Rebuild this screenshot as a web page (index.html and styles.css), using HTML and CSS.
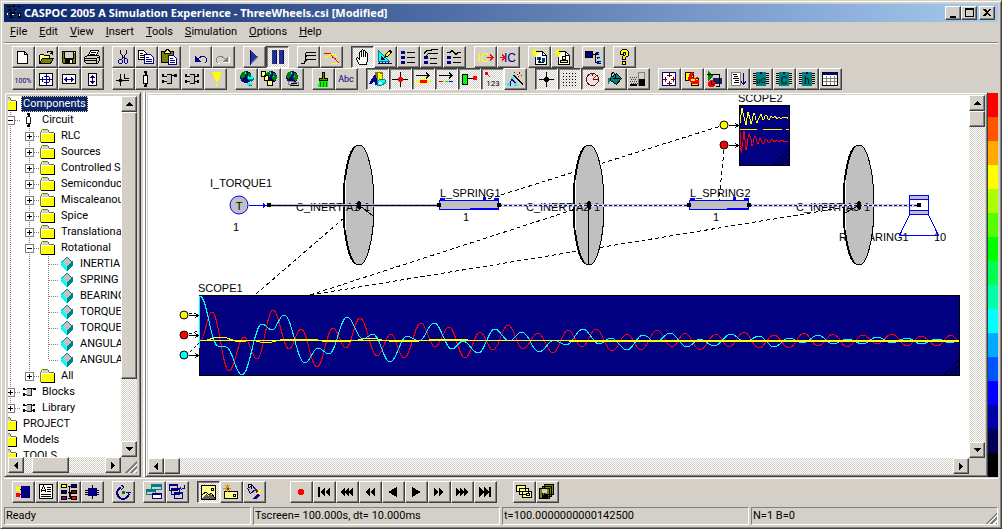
FILE: index.html
```
<!DOCTYPE html>
<html lang="en">
<head>
    <meta charset="UTF-8">
    <meta name="viewport" content="width=device-width, initial-scale=1.0">
    <title>CASPOC 2005 A Simulation Experience - ThreeWheels.csi [Modified]</title>
    <link rel="stylesheet" href="styles.css">
</head>
<body>
    <!-- shared symbols -->
    <svg class="symbols" aria-hidden="true">
        <symbol id="folder" viewBox="0 0 16 14">
            <path d="M1 4L3 1h5l2 3z" fill="#d4d0c8"/>
            <path d="M1 4h13v9H1z" fill="#ff0"/>
            <path d="M1.500 12V4.500h12" stroke="#fff" fill="none"/>
            <path d="M.5 13V3.500L2.500.5h5l2 3h4" stroke="#808000" fill="none"/>
            <path d="M1 13.500h13.500V4" stroke="#000" fill="none"/>
        </symbol>
        <symbol id="cube" viewBox="0 0 12 14">
            <path d="M6 0l5 5-5 4-5-4z" fill="#c0c0c0"/>
            <path d="M0 4l6 5v5l-6-5z" fill="#0ff"/>
            <path d="M12 4L6 9v5l6-5z" fill="#008080"/>
            <path d="M6 0L1 5M6 0l5 5" stroke="#008080"/>
        </symbol>
        <symbol id="part" viewBox="0 0 16 16">
            <path d="M5.500 4.500h4v8h-4z" fill="#fff" stroke="#000"/>
            <path d="M7 1h2v3H7zM7 13h2v3H7z" fill="#000"/>
            <path d="M6 0h3v2H6zM6 14h3v2H6z" fill="#000"/>
        </symbol>
        <symbol id="block" viewBox="0 0 16 16">
            <path d="M6 3h4v10H6z" fill="#c0c0c0"/>
            <path d="M6 3.500h5M10.500 3v10M6 12.500h4" stroke="#000"/>
            <path d="M1 3h2v3H1zM1 9h2v3H1zM13 3h3v3h-3z" fill="#000"/>
            <path d="M3 5.500h3M3 10.500h3M11 4.500h3" stroke="#000"/>
        </symbol>
        <symbol id="library" viewBox="0 0 16 16">
            <path d="M6 3h4v10H6z" fill="#c0c0c0"/>
            <path d="M6 3.500h5M10.500 3v10M6 12.500h4" stroke="#000"/>
            <path d="M1 3h2v3H1zM1 9h2v3H1zM13 3h2v3h-2zM13 9h2v3h-2z" fill="#000"/>
            <path d="M3 5.500h3M3 10.500h3M11 5.500h3M11 10.500h3" stroke="#000"/>
        </symbol>
        <symbol id="globe" viewBox="0 0 16 16">
            <circle cx="8" cy="6" r="6" fill="#000080"/>
            <path d="M4 1l4-1 1 3-2 1v2l-3 2-2-2 1-3zM10 2l3 1 1 4-2 3-3-2z" fill="#008000"/>
            <path d="M7 1h1v2H7zM10 5h1v1h-1z" fill="#0ff"/>
        </symbol>
        <symbol id="chip" viewBox="0 0 16 16">
            <path d="M0 2.500h16M0 4.500h16M0 6.500h16M0 8.500h16M0 10.500h16M0 12.500h16" stroke="#000"/>
            <path d="M3 1h10v14H3z" fill="#008080"/>
            <path d="M7 1h2v2H7z" fill="#000080"/>
        </symbol>
        <symbol id="bullets" viewBox="0 0 16 16">
            <path d="M1 2h4v3H1zM1 7h4v3H1zM1 12h4v3H1z" fill="#000080"/>
        </symbol>
        <symbol id="newdoc" viewBox="0 0 16 16">
            <path d="M4.500 2.500h7l4 4v9h-11z" fill="#fff" stroke="#000"/>
            <path d="M11.500 2v4.500h4" stroke="#000" fill="none"/>
            <path d="M0 3.500h8M4.500 0v8M1 0l6 7M7 0L1 7" stroke="#ff0" fill="none"/>
        </symbol>
        <symbol id="arrow-up" viewBox="0 0 7 4"><path d="M0 4h7L3.500 0z"/></symbol>
        <symbol id="arrow-down" viewBox="0 0 7 4"><path d="M0 0h7L3.500 4z"/></symbol>
        <symbol id="arrow-left" viewBox="0 0 4 7"><path d="M4 0v7L0 3.500z"/></symbol>
        <symbol id="arrow-right" viewBox="0 0 4 7"><path d="M0 0v7l4-3.500z"/></symbol>
    </svg>

    <div class="window">
        <header class="titlebar">
            <svg class="app-icon" viewBox="0 0 16 16"><path d="M1 1h5v1H1zM7 0h2v2H7zM11 1h4v1h-4zM2 4h3v2H2zM8 4h2v1H8zM4 7h5v2H4zM4 7h2v6H4zM4 12h4v1H4zM12 8h3v5h-3z"/><path d="M6 9h2v1H6zM13 9h1v2h-1zM1 8h1v2H1z" fill="#fff"/></svg>
            <h1>CASPOC 2005 A Simulation Experience - ThreeWheels.csi [Modified]</h1>
            <div class="window-controls">
                <button class="control" title="Minimize"><svg viewBox="0 0 12 10"><path d="M3 8h6v2H3z"/></svg></button>
                <button class="control" title="Maximize"><svg viewBox="0 0 12 10"><path d="M2 0h9v9H2zM3 2v6h7V2z" fill-rule="evenodd"/></svg></button>
                <button class="control close" title="Close"><svg viewBox="0 0 12 10"><path d="M2 1h2l2 2 2-2h2L7 4.500 10 8H8L6 6 4 8H2l3-3.500z"/></svg></button>
            </div>
        </header>

        <nav class="menubar">
            <button><u>F</u>ile</button>
            <button><u>E</u>dit</button>
            <button><u>V</u>iew</button>
            <button><u>I</u>nsert</button>
            <button><u>T</u>ools</button>
            <button><u>S</u>imulation</button>
            <button><u>O</u>ptions</button>
            <button><u>H</u>elp</button>
        </nav>

        <div class="toolbars">
            <div class="toolbar">
                <div class="group">
                    <button class="tool" title="New"><svg viewBox="0 0 16 16"><path d="M2.500 2.500h7l3 3v9h-10z" fill="#fff"/><path d="M9.500 2v3.500h3"/></svg></button>
                    <button class="tool" title="Open"><svg viewBox="0 0 16 16"><path d="M1.500 14V6.500l1-1h3l1 1h5v3h-7z" fill="#ff8"/><path d="M1.500 14.500l3-5h11l-3 5z" fill="#808000"/><path d="M9 3.500l1-1h3l1 1v2M12 4.500h3M14.500 2v3"/></svg></button>
                    <button class="tool" title="Save"><svg viewBox="0 0 16 16"><path d="M1.500 2.500h13v12h-12l-1-1z" fill="#808000"/><path d="M4 3h8v6H4z" fill="#d4d0c8" stroke="none"/><path d="M4 10h8v5H4z" fill="#000" stroke="none"/><path d="M9 11h2v3H9zM13 3h1v1h-1z" fill="#fff" stroke="none"/><path d="M3.500 3v6.500h9V3"/></svg></button>
                    <button class="tool" title="Print"><svg viewBox="0 0 16 16"><path d="M4.500 6.500l2-5h8l-2 5z" fill="#fff"/><path d="M7 3.500h5M6 5.500h5"/><path d="M.5 8.500l3-2h11l1 1v4l-2 3H2.500l-2-2z" fill="#d4d0c8"/><path d="M.5 9.500h12v4M1 11.500h12M12.500 9.500l3-2M3 14.500h9"/><path d="M9 10h2v1H9z" fill="#ff0" stroke="none"/></svg></button>
                </div>
                <div class="group">
                    <button class="tool" title="Cut"><svg viewBox="0 0 16 16"><path d="M5.500 1v3l4 6M11.500 1v3l-4 6"/><g stroke="#000080"><path d="M4.500 10.500h2l1 1v2l-1 1h-2l-1-1v-2zM10.500 9.500h1l1 1v3l-1 1h-1l-1-1v-3zM7.500 10v-2h2v2"/></g></svg></button>
                    <button class="tool" title="Copy"><svg viewBox="0 0 16 16"><path d="M.5 1.500h5l3 3v6h-8z" fill="#fff"/><path d="M2 4.500h3M2 6.500h5M2 8.500h5"/><path d="M6.500 5.500h6l3 3v6h-9z" fill="#fff" stroke="#000080"/><path d="M8 8.500h3M8 10.500h6M8 12.500h6" stroke="#000080"/></svg></button>
                    <button class="tool" title="Paste"><svg viewBox="0 0 16 16"><path d="M.5 2.500h12v11H.5z" fill="#808000"/><path d="M3.500 4.500v-2h1l1-2h2l1 2h1v2z" fill="#ff8"/><path d="M7.500 6.500h5l3 3v6h-8z" fill="#fff" stroke="#000080"/><path d="M9 9.500h3M9 11.500h5M9 13.500h5" stroke="#000080"/></svg></button>
                </div>
                <div class="group">
                    <button class="tool" title="Undo"><svg viewBox="0 0 16 16"><path d="M3 7v6h6z" fill="#000080" stroke="none"/><path d="M5.500 10.500l2-2 2-1h3l2 2v3l-2 2" stroke="#000080"/></svg></button>
                    <button class="tool" title="Redo"><svg viewBox="0 0 16 16"><path d="M14.500 8v5.500H8M3 14.500h2" stroke="#fff"/><path d="M13 7v6H7z" fill="#808080" stroke="none"/><path d="M10.500 10.500l-2-2-2-1h-3l-2 2v3l2 2" stroke="#808080"/></svg></button>
                </div>
                <div class="group">
                    <button class="tool" title="Start simulation"><svg viewBox="0 0 16 16"><path d="M4 1l8 7-8 8z" fill="#22308c" stroke="none"/><path d="M4.500 1v15" stroke="#000080"/><path d="M5 14.500l7-7" stroke="#6070b0"/></svg></button>
                    <button class="tool pressed" title="Pause simulation"><svg viewBox="0 0 16 16"><path d="M3 1h5v14H3zM10 1h5v14h-5z" fill="#22308c" stroke="none"/><path d="M7.500 1v14M14.500 1v14" stroke="#000080"/></svg></button>
                </div>
                <div class="group">
                    <button class="tool" title="Curves"><svg viewBox="0 0 16 16"><path d="M1 14.500h3l1-2V5l2-2h9M5 8.500l2-2h9M5 12.500l2-2h9"/></svg></button>
                    <button class="tool" title="Trace"><svg viewBox="0 0 16 16"><path d="M1 4.500h6l3 4 2 1 4 5" stroke="#f00"/><path d="M1 8.500h3l3-3h5l2 2M9 14.500h7" stroke="#ff0"/></svg></button>
                </div>
                <div class="group">
                    <button class="tool pressed" title="Pan"><svg viewBox="0 0 16 16"><path d="M5.500 15.500l-2-3-1-3 1-1 2 2V3.500l1-1 1 1v-2l1-1 1 1v1l1-1 1 1v2l1-1 1 1v7l-1 4z" fill="#fff"/><path d="M7.500 3v5M9.500 2v6M11.500 4v4"/></svg></button>
                    <button class="tool" title="Draw"><svg viewBox="0 0 16 16"><path d="M1.500 1.500v11h11z" fill="#0ff" stroke="#008080"/><path d="M4.500 8v2h2z" fill="#d4d0c8"/><path d="M1 14.500h14M2.500 13v2M5.500 13v2M8.500 13v2M11.500 13v2" stroke="#000080"/><path d="M8 8l1-3 4-4 2 2-4 4z" fill="#ff0"/><path d="M12 2l3 2"/></svg></button>
                    <button class="tool" title="List"><svg viewBox="0 0 16 16"><use href="#bullets" stroke="none"/><path d="M7 3.500h8M7 8.500h8M7 13.500h8"/></svg></button>
                    <button class="tool" title="List curves"><svg viewBox="0 0 16 16"><path d="M1 7h4v3H1zM1 12h4v3H1z" fill="#000080" stroke="none"/><path d="M1 4.500l3-3h3l3-1h5M3 6.500l3-2h9M7 9.500h7M7 14.500h7"/></svg></button>
                    <button class="tool" title="List waves"><svg viewBox="0 0 16 16"><path d="M1 7h4v3H1zM1 12h4v3H1z" fill="#000080" stroke="none"/><path d="M1 3.500h3l2-2 2 2 2 2 2-2h3M7 8.500h8M7 13.500h8"/></svg></button>
                </div>
                <div class="group">
                    <button class="tool" title="Save IC"><svg viewBox="0 0 16 16"><text x="0" y="13" class="ic" fill="#ff0">IC</text><path d="M10 8.500h6M13 5.500l3 3-3 3" stroke="#f00"/></svg></button>
                    <button class="tool" title="Load IC"><svg viewBox="0 0 16 16"><text x="4" y="13" class="ic" fill="#000080">IC</text><path d="M0 8.500h5M2 5.500l3 3-3 3" stroke="#f00"/></svg></button>
                </div>
                <div class="group">
                    <button class="tool" title="New schematic"><svg viewBox="0 0 16 16"><use href="#newdoc"/><path d="M6 8h4v3H6zM11 9h3v4h-3zM7 12h3v2H7z" fill="#004080" stroke="none"/><path d="M8 9v4h5"/></svg></button>
                    <button class="tool" title="New library"><svg viewBox="0 0 16 16"><use href="#newdoc"/><path d="M6.500 11.500h7v2h-7z" fill="#ff0"/><path d="M8.500 7.500h3v3h-3z"/></svg></button>
                </div>
                <div class="group">
                    <button class="tool" title="Blocks"><svg viewBox="0 0 16 16"><path d="M0 2h7v6H0z" fill="#000080"/><path d="M7 5.500h3v8h2M10 4.500h5"/><path d="M11 3h3v3h-3zM12 8h3v2h-3zM12 12h4v3h-4z" fill="#000080" stroke="none"/><path d="M13 4h2v1h-2zM13 9h2v1h-2zM14 13h2v1h-2z" fill="#0ff" stroke="none"/></svg></button>
                </div>
                <div class="group">
                    <button class="tool" title="Help"><svg viewBox="0 0 16 16"><path d="M4.500 5.500v-3l2-2h4l2 2v4l-3 2v2h-3v-3l3-2v-2h-2v2zM6.500 12.500h3v3h-3z" fill="#ff0"/></svg></button>
                </div>
            </div>

            <div class="toolbar">
                <div class="group">
                    <button class="tool" title="Zoom 100%"><svg viewBox="0 0 16 16"><text x="8" y="12" text-anchor="middle" class="tiny" fill="#000080">100%</text></svg></button>
                    <button class="tool" title="Zoom to fit"><svg viewBox="0 0 16 16"><path d="M1.500 2.500h13v12h-13z" fill="#fff"/><path d="M2 8.500h12M8.500 3v11M6 5.500h5M6 11.500h5M4.500 6v5M11.500 6v5" stroke="#000080"/></svg></button>
                    <button class="tool" title="Fit width"><svg viewBox="0 0 16 16"><path d="M1.500 3.500h13v9h-13z" fill="#fff"/><path d="M3 8.500h10M5.500 6v5M10.500 6v5M4.500 7v3M11.500 7v3" stroke="#000080"/></svg></button>
                    <button class="tool" title="Fit height"><svg viewBox="0 0 16 16"><path d="M4.500 2.500h8v12h-8z" fill="#fff"/><path d="M8.500 4v9M6 6.500h5M7 5.500h3M6 10.500h5M7 11.500h3" stroke="#000080"/></svg></button>
                </div>
                <div class="group">
                    <button class="tool" title="Node"><svg viewBox="0 0 16 16"><path d="M1 9.500h13M5.500 3v12M9.500 3v4h4"/><path d="M4 8h3v3H4z" fill="#000" stroke="none"/></svg></button>
                    <button class="tool" title="Component"><svg viewBox="0 0 16 16"><use href="#part" stroke="none"/></svg></button>
                    <button class="tool" title="Block"><svg viewBox="0 0 16 16"><use href="#block" stroke="none"/></svg></button>
                    <button class="tool" title="Library block"><svg viewBox="0 0 16 16"><use href="#library" stroke="none"/></svg></button>
                    <button class="tool" title="Note"><svg viewBox="0 0 16 16"><path d="M5 1h10l-4 9v1H9v-1zM9 13h2v2H9z" fill="#ff0" stroke="none"/></svg></button>
                </div>
                <div class="group">
                    <button class="tool" title="Web"><svg viewBox="0 0 16 16"><use href="#globe" stroke="none"/><path d="M10 6h3V4l3 3-3 3V8h-3zM14 12h-3v-2l-3 3 3 3v-2h3z" fill="#0ff" stroke="none"/><path d="M10 8.500h3v2l3-3M14 14.500h-3" stroke="#008080"/></svg></button>
                    <button class="tool" title="Web documents"><svg viewBox="0 0 16 16"><use href="#globe" stroke="none" x="2"/><path d="M.5.5h4v5h-4zM3.500 4.500h4v5h-4zM6.500 9.500h5v5h-5z" fill="#ff8"/></svg></button>
                    <button class="tool" title="Web link"><svg viewBox="0 0 16 16"><use href="#globe" stroke="none"/><path d="M4.500 10.500h5v3h-5zM9.500 11.500h5v3h-5z" stroke="#808080" fill="#d4d0c8"/><path d="M6 14.500h9M7 12.500h6"/></svg></button>
                </div>
                <div class="group">
                    <button class="tool" title="Format"><svg viewBox="0 0 16 16"><path d="M7.500 1.500h2v6h3v2h-8v-2h3z" fill="#808000"/><path d="M4 10h9v6H3z" fill="#0f0" stroke="none"/><path d="M5.500 11v5M8.500 11v5M11.500 11v5" stroke="#008000"/></svg></button>
                    <button class="tool" title="Text"><svg viewBox="0 0 16 16"><text x="8" y="11" text-anchor="middle" class="abc">Abc</text></svg></button>
                </div>
                <div class="group">
                    <button class="tool pressed" title="Shapes"><svg viewBox="0 0 16 16"><path d="M6 1h8v9H6z" fill="#808000" stroke="none"/><path d="M9 2l4 1v9L9 10z" fill="#ff0" stroke="none"/><path d="M0 13l5-9h2l2 10H6v-3H4l-1 2z" fill="#0000a0" stroke="none"/><path d="M8 11l3-3 5 1v3l-4 3-4-1z" fill="#0ff" stroke="#008080"/><path d="M10 11h3v2h-3z" fill="#fff" stroke="none"/></svg></button>
                    <button class="tool pressed" title="Show nodes"><svg viewBox="0 0 16 16"><path d="M0 8.500h16M8.500 1v15"/><path d="M7 6h3v1h1v3h-1v1H7v-1H6V7h1z" fill="#f00" stroke="none"/></svg></button>
                    <button class="tool pressed" title="Show current"><svg viewBox="0 0 16 16"><path d="M1 4.500h14M11 1.500l3 3-3 3"/><path d="M0 10h16v1H0zM4 8h9v5H4z" fill="#ff0" stroke="none"/><path d="M5 9h7v3H5z" fill="#f00" stroke="none"/></svg></button>
                    <button class="tool pressed" title="Show voltage"><svg viewBox="0 0 16 16"><path d="M1 4.500h14M11 1.500l3 3-3 3"/><path d="M1 10.500h4" stroke="#f00"/><path d="M5 10.500h2" stroke="#ff0"/><path d="M7 10.500h4" stroke="#0f0"/><path d="M11 10.500h4" stroke="#00f"/></svg></button>
                    <button class="tool pressed" title="Show values"><svg viewBox="0 0 16 16"><path d="M1.500 3.500h5v10h-5z" fill="#0f0"/><path d="M7 7.500h5"/><path d="M12 5h4v4h-4z" fill="#f00" stroke="none"/></svg></button>
                    <button class="tool pressed" title="Show numbers"><svg viewBox="0 0 16 16"><path d="M1 1h3v3H1z" fill="#f00" stroke="none"/><path d="M4 4l2 2" stroke="#f00"/><text x="9" y="15" text-anchor="middle" class="num">123</text></svg></button>
                    <button class="tool" title="Wizard"><svg viewBox="0 0 16 16"><path d="M6 4l10 10M7 4l9 9" /><path d="M7.500 1v1M9.500 3h1M12.500 1v2M14 4.500h1M11 5.500h1" stroke="#800000"/><path d="M1 14.500h2v-3l2-3 3 3v3h2M5 8V6" stroke="#000080"/><path d="M0 12h3v3H0zM7 12h3v3H7zM4 6h3v2H4z" fill="#0ff" stroke="none"/></svg></button>
                </div>
                <div class="group">
                    <button class="tool pressed" title="Crosshair"><svg viewBox="0 0 16 16"><path d="M1 8.500h15M8.500 1v15"/><path d="M7 6h3v1h1v3h-1v1H7v-1H6V7h1z" fill="#000" stroke="none"/></svg></button>
                    <button class="tool pressed" title="Grid"><svg viewBox="0 0 16 16"><path d="M2 2.500h14M2 5.500h14M2 8.500h14M2 11.500h14M2 14.500h14" stroke-dasharray="1 2"/></svg></button>
                    <button class="tool pressed" title="Gauge"><svg viewBox="0 0 16 16"><circle cx="8.500" cy="8.500" r="6" stroke="#800000"/><path d="M8.500 8.500h5M8.500 8.500l4-4M8.500 3v2" stroke="#800000"/></svg></button>
                    <button class="tool" title="Fill"><svg viewBox="0 0 16 16"><path d="M3.500 6.500l6-4 5 5-5 6-6-4z" fill="#008080"/><path d="M4.500 6V2.500l2-1 2 2v4M6 7.500h7"/><path d="M1 7l3-1-1 3-1 5-1-3z" fill="#008080" stroke="none"/></svg></button>
                    <button class="tool" title="Shading"><svg viewBox="0 0 16 16"><path d="M8.500 1.500h6v13h-6z" stroke="#808080"/><path d="M9 8h6v7H9z" fill="#000" stroke="none"/><path d="M0 6.500h7M1 8.500h6M0 10.500h8M1 12.500h7" stroke-dasharray="1 1" stroke="#404040"/><path d="M0 13h7v2H0z" fill="#000" stroke="none"/></svg></button>
                </div>
                <div class="group">
                    <button class="tool" title="Move"><svg viewBox="0 0 16 16"><path d="M1.500 1.500h13v13h-13z" fill="#fff" stroke="#000080"/><path d="M2 8.500h4M10 8.500h4M8.500 2v4M8.500 10v4M6 4.500h5M6 12.500h5M4.500 6v5M12.500 6v5" stroke="#800000"/></svg></button>
                    <button class="tool" title="Rotate"><svg viewBox="0 0 16 16"><path d="M1.500 1.500h8v8h-8zM7.500 7.500h7v7h-7z" fill="#ff0"/><path d="M7 1L5 4l-1 5 4 4h7v-4h-3l2-3-4 1-2-1 2-4z" fill="#f00" stroke="none"/><path d="M7 8h4v2H7z" fill="#ff0" stroke="none"/></svg></button>
                    <button class="tool" title="Timing"><svg viewBox="0 0 16 16"><path d="M1 0l6 5-6 5z" fill="#008000" stroke="none"/><path d="M6 7h9v6H6z" fill="#0a246a" stroke="none"/><path d="M0 3.500h12v12M9 15.500h4"/><circle cx="4.500" cy="12.500" r="3" fill="#f00" stroke="#f00"/><path d="M4.500 10v3h2"/></svg></button>
                    <button class="tool" title="Report"><svg viewBox="0 0 16 16"><path d="M1.500 1.500h9v13h-9z" fill="#fff" stroke="#808080"/><path d="M3 3.500h4M4 5.500h4M3 7.500h6M5 9.500h4M4 11.500h5"/><path d="M13.500 2v11M11 10.500l2.500 3 2.500-3" stroke="#000080"/></svg></button>
                    <button class="tool" title="Microcontroller export"><svg viewBox="0 0 16 16"><use href="#chip" stroke="none"/><text x="8" y="12" text-anchor="middle" class="num">µC</text></svg></button>
                    <button class="tool" title="C export"><svg viewBox="0 0 16 16"><use href="#chip" stroke="none"/><text x="8" y="13" text-anchor="middle" class="letter">C</text></svg></button>
                    <button class="tool" title="Header export"><svg viewBox="0 0 16 16"><use href="#chip" stroke="none"/><text x="8" y="13" text-anchor="middle" class="letter">h</text></svg></button>
                    <button class="tool" title="Table"><svg viewBox="0 0 16 16"><path d="M.5 1.500h15v13H.5z" fill="#fff"/><path d="M1 2h14v2H1z" fill="#000080" stroke="none"/><path d="M1 7.500h14M1 10.500h14M4.500 5v9M8.500 5v9M12.500 5v9" stroke="#808080"/></svg></button>
                </div>
            </div>
        </div>

        <main class="work">
            <aside class="panel tree-panel">
                <div class="tree-view">
                    <ul class="tree">
                        <li>
                            <div class="row"><span class="toggle-space"></span><svg class="icon"><use href="#folder"/></svg><span class="label selected">Components</span></div>
                            <ul>
                                <li>
                                    <div class="row"><span class="branch"><button class="toggle" aria-label="Collapse Circuit"><i class="minus"></i></button></span><svg class="icon"><use href="#part"/></svg><span class="label">Circuit</span></div>
                                    <ul>
                                        <li class="row"><span class="branch"><button class="toggle" aria-label="Expand RLC"><i class="plus"></i></button></span><svg class="icon"><use href="#folder"/></svg><span class="label">RLC</span></li>
                                        <li class="row"><span class="branch"><button class="toggle" aria-label="Expand Sources"><i class="plus"></i></button></span><svg class="icon"><use href="#folder"/></svg><span class="label">Sources</span></li>
                                        <li class="row"><span class="branch"><button class="toggle" aria-label="Expand Controlled Sources"><i class="plus"></i></button></span><svg class="icon"><use href="#folder"/></svg><span class="label">Controlled Sources</span></li>
                                        <li class="row"><span class="branch"><button class="toggle" aria-label="Expand Semiconductors"><i class="plus"></i></button></span><svg class="icon"><use href="#folder"/></svg><span class="label">Semiconductors</span></li>
                                        <li class="row"><span class="branch"><button class="toggle" aria-label="Expand Miscaleanous"><i class="plus"></i></button></span><svg class="icon"><use href="#folder"/></svg><span class="label">Miscaleanous</span></li>
                                        <li class="row"><span class="branch"><button class="toggle" aria-label="Expand Spice"><i class="plus"></i></button></span><svg class="icon"><use href="#folder"/></svg><span class="label">Spice</span></li>
                                        <li class="row"><span class="branch"><button class="toggle" aria-label="Expand Translational"><i class="plus"></i></button></span><svg class="icon"><use href="#folder"/></svg><span class="label">Translational</span></li>
                                        <li>
                                            <div class="row"><span class="branch"><button class="toggle" aria-label="Collapse Rotational"><i class="minus"></i></button></span><svg class="icon"><use href="#folder"/></svg><span class="label">Rotational</span></div>
                                            <ul>
                                                <li class="row"><span class="branch leaf"></span><svg class="icon"><use href="#cube"/></svg><span class="label">INERTIA</span></li>
                                                <li class="row"><span class="branch leaf"></span><svg class="icon"><use href="#cube"/></svg><span class="label">SPRING</span></li>
                                                <li class="row"><span class="branch leaf"></span><svg class="icon"><use href="#cube"/></svg><span class="label">BEARING</span></li>
                                                <li class="row"><span class="branch leaf"></span><svg class="icon"><use href="#cube"/></svg><span class="label">TORQUE</span></li>
                                                <li class="row"><span class="branch leaf"></span><svg class="icon"><use href="#cube"/></svg><span class="label">TORQUE</span></li>
                                                <li class="row"><span class="branch leaf"></span><svg class="icon"><use href="#cube"/></svg><span class="label">ANGULAR</span></li>
                                                <li class="row"><span class="branch leaf"></span><svg class="icon"><use href="#cube"/></svg><span class="label">ANGULAR</span></li>
                                            </ul>
                                        </li>
                                        <li class="row"><span class="branch"><button class="toggle" aria-label="Expand All"><i class="plus"></i></button></span><svg class="icon"><use href="#folder"/></svg><span class="label">All</span></li>
                                    </ul>
                                </li>
                                <li class="row"><span class="branch"><button class="toggle" aria-label="Expand Blocks"><i class="plus"></i></button></span><svg class="icon"><use href="#block"/></svg><span class="label">Blocks</span></li>
                                <li class="row"><span class="branch"><button class="toggle" aria-label="Expand Library"><i class="plus"></i></button></span><svg class="icon"><use href="#library"/></svg><span class="label">Library</span></li>
                            </ul>
                        </li>
                        <li class="row"><span class="toggle-space"></span><svg class="icon"><use href="#folder"/></svg><span class="label">PROJECT</span></li>
                        <li class="row"><span class="toggle-space"></span><svg class="icon"><use href="#folder"/></svg><span class="label">Models</span></li>
                        <li class="row"><span class="toggle-space"></span><svg class="icon"><use href="#folder"/></svg><span class="label">TOOLS</span></li>
                    </ul>
                </div>
                <div class="scrollbar vertical">
                    <button class="arrow" aria-label="Scroll up"><svg width="7" height="4"><use href="#arrow-up"/></svg></button>
                    <div class="thumb tree-thumb-v"></div>
                    <button class="arrow last" aria-label="Scroll down"><svg width="7" height="4"><use href="#arrow-down"/></svg></button>
                </div>
                <div class="scrollbar">
                    <button class="arrow" aria-label="Scroll left"><svg width="4" height="7"><use href="#arrow-left"/></svg></button>
                    <div class="thumb tree-thumb-h"></div>
                    <button class="arrow last" aria-label="Scroll right"><svg width="4" height="7"><use href="#arrow-right"/></svg></button>
                </div>
                <div class="grip"></div>
            </aside>

            <section class="panel sheet-panel">
                <div class="sheet">
                    <svg class="diagram" width="821" height="364" viewBox="148 95 821 364">
                        <!-- signal links -->
                        <g class="link">
                            <path d="M488 199L724 125M724 150L719 200"/>
                            <path d="M256 294L359 205M310 295L588 205M310 295L859 205"/>
                        </g>
                        <g class="name">
                            <text x="210" y="187">I_TORQUE1</text>
                            <text x="233" y="231">1</text>
                            <text x="440" y="197">L_SPRING1</text>
                            <text x="463" y="221">1</text>
                            <text x="690" y="197">L_SPRING2</text>
                            <text x="713" y="221">1</text>
                            <text x="839" y="241">R_BEARING1</text>
                            <text x="934" y="241">10</text>
                            <text x="198" y="292">SCOPE1</text>
                            <text x="738" y="102">SCOPE2</text>
                        </g>
                        <!-- torque source -->
                        <circle cx="239" cy="205" r="9" class="part"/>
                        <text x="239" y="210" text-anchor="middle" class="t">T</text>
                        <path d="M249 205.500h18" stroke="#00f"/>
                        <path d="M263 203l4 2.500-4 2.500z" fill="#00f"/>
                        <!-- wheels -->
                        <g class="wheel">
                            <ellipse cx="357" cy="205" rx="14" ry="59"/><ellipse cx="359" cy="205" rx="15" ry="60"/>
                            <ellipse cx="587" cy="205" rx="14" ry="59"/><ellipse cx="589" cy="205" rx="15" ry="60"/>
                            <ellipse cx="857" cy="205" rx="14" ry="59"/><ellipse cx="859" cy="205" rx="15" ry="60"/>
                            <path d="M345.500 180v50M575.500 180v50M845.500 180v50" stroke="#fff"/>
                            <path d="M359 205l14 11M588.500 205v59M859 205l-14 8"/>
                        </g>
                        <!-- springs -->
                        <g class="part">
                            <path d="M439.500 200.500h59v9h-59zM689.500 200.500h59v9h-59z"/>
                            <path d="M470 208.500h28M727 208.500h21"/>
                        </g>
                        <path d="M440 198h5v3h-5zM494 198h5v3h-5zM690 198h5v3h-5zM744 198h5v3h-5zM483 197h3v3h-3zM733 197h3v3h-3z" fill="#00f"/>
                        <!-- shafts -->
                        <path d="M269 205.500h170M499 205.500h190M749 205.500h170" class="shaft"/>
                        <g class="name">
                            <text x="296" y="211">C_INERTIA1</text>
                            <text x="364" y="211">1</text>
                            <text x="526" y="211">C_INERTIA2</text>
                            <text x="594" y="211">1</text>
                            <text x="796" y="211">C_INERTIA3</text>
                            <text x="864" y="211">1</text>
                        </g>
                        <path d="M269 204.500h170M499 204.500h190M749 204.500h170" stroke="#c0c0c0"/>
                        <path d="M269 205.500h170" stroke="#000"/>
                        <path d="M269 205.500h170" stroke="#0000c0" stroke-dasharray="2 4"/>
                        <path d="M499 205.500h190M749 205.500h170" stroke="#fff"/>
                        <path d="M499 205.500h190M749 205.500h170" stroke="#0000c0" stroke-dasharray="3 2"/>
                        <path d="M267 203h4v4h-4zM437 203h4v4h-4zM497 203h4v4h-4zM687 203h4v4h-4zM747 203h4v4h-4zM917 203h4v4h-4z"/>
                        <path d="M359 200l2 3v5l-2 2-2-2v-5zM589 200l2 3v5l-2 2-2-2v-5zM859 200l2 3v5l-2 2-2-2v-5z"/>
                        <!-- bearing -->
                        <g class="part">
                            <path d="M909.500 195.500h19v4h-19zM909.500 210.500h19v4h-19z"/>
                            <path d="M909.500 199v12M928.500 199v12M909.500 215l-10 20.500h39l-10-20.500" fill="none"/>
                        </g>
                        <!-- scope inputs -->
                        <g class="pin">
                            <path d="M189 315.500h10M189 335.500h10M189 355.500h10M729 125.500h10M729 145.500h10"/>
                            <path d="M195 313l3 2.500-3 2.500M195 333l3 2.500-3 2.500M195 353l3 2.500-3 2.500M735 123l3 2.500-3 2.500M735 143l3 2.500-3 2.500"/>
                            <path d="M190 352l9-9M189 334l9-3M189 314l7-1" stroke-dasharray="3 2"/>
                            <circle cx="184" cy="315" r="4" fill="#ff0"/>
                            <circle cx="184" cy="335" r="4" fill="#f00"/>
                            <circle cx="184" cy="355" r="4" fill="#0ff"/>
                            <circle cx="724" cy="125" r="4" fill="#ff0"/>
                            <circle cx="724" cy="145" r="4" fill="#f00"/>
                        </g>
                        <svg x="199" y="295" width="762" height="82">
                            <rect x=".5" y=".5" width="760" height="80" class="screen"/>
                            <path d="M.5 1v52" stroke="#0ff"/>
                            <g id="scope1" class="traces"></g>
                            <path d="M1 45.500h759" stroke="#ff0"/>
                            <path d="M745 80l15-15M750 80l10-10M755 80l5-5" stroke="#000"/>
                        </svg>
                        <svg x="739" y="105" width="52" height="62">
                            <rect x=".5" y=".5" width="50" height="60" class="screen"/>
                            <path d="M1 24.500h17M24 24.500h19M47 24.500h3" stroke="#ff0"/>
                            <g id="scope2" class="traces"></g>
                            <path d="M34 60l16-16M39 60l11-11M44 60l6-6" stroke="#000"/>
                        </svg>
                    </svg>
                </div>
                <div class="scrollbar vertical">
                    <button class="arrow" aria-label="Scroll up"><svg width="7" height="4"><use href="#arrow-up"/></svg></button>
                    <div class="thumb"></div>
                    <button class="arrow last" aria-label="Scroll down"><svg width="7" height="4"><use href="#arrow-down"/></svg></button>
                </div>
                <div class="scrollbar">
                    <button class="arrow" aria-label="Scroll left"><svg width="4" height="7"><use href="#arrow-left"/></svg></button>
                    <div class="thumb"></div>
                    <button class="arrow last" aria-label="Scroll right"><svg width="4" height="7"><use href="#arrow-right"/></svg></button>
                </div>
            </section>
            <div class="colorbar"></div>
        </main>

        <div class="toolbar bottom">
            <div class="group">
                <button class="tool" title="Scope block"><svg viewBox="0 0 16 16"><path d="M6 2h9v12H6z" fill="#000080" stroke="none"/><path d="M4 5.500h3M4 10.500h3"/><path d="M1 3h4v4H1z" fill="#ff0" stroke="none"/><path d="M1 9h4v4H1z" fill="#f00" stroke="none"/></svg></button>
                <button class="tool" title="Text"><svg viewBox="0 0 16 16"><path d="M1.500.5h13v14h-13z" fill="#fff"/><path d="M3.500 8V6l2-4 2 4v2M4 6.500h3M9 3.500h4M9 5.500h4M9 7.500h4M3 10.500h10M3 12.500h10"/></svg></button>
                <button class="tool" title="Nodes"><svg viewBox="0 0 16 16"><path d="M7 2.500h4M7 8.500h2v5M8.500 3v10M7 14.500h4"/><path d="M.5.5h5v3h-5z" fill="#ff0"/><path d="M10.500.5h5v3h-5zM.5 6.500h5v3h-5z" fill="#000080"/><path d="M10.500 6.500h5v3h-5z" fill="#800000"/><path d="M.5 12.500h5v3h-5z" fill="#800080"/><path d="M10.500 12.500h5v3h-5z" fill="#f00"/></svg></button>
                <button class="tool" title="Chip"><svg viewBox="0 0 16 16"><path d="M1 6.500h14M1 8.500h14M1 10.500h14M8.500 1v14" /><path d="M4 4h9v8H4z" fill="#000080" stroke="none"/></svg></button>
            </div>
            <div class="group">
                <button class="tool" title="Refresh"><svg viewBox="0 0 16 16"><path d="M6 3.500l-3 2-1 3 1 4 3 2h4l3-2 1-3" stroke="#000080" stroke-width="2"/><path d="M11 8.500h5M6 1l3 2-3 3" stroke="#000080"/><path d="M7 7h3v3H7z" fill="#008000" stroke="none"/></svg></button>
            </div>
            <div class="group">
                <button class="tool" title="Tile windows"><svg viewBox="0 0 16 16"><path d="M5.500.5h10v5h-10zM.5 5.500h9v5h-9z" fill="#d4d0c8" stroke="#008080"/><path d="M5 1.500h11M0 6.500h10" stroke="#008080" stroke-width="2"/><path d="M6.500 9.500h9v5h-9z" fill="#fff" stroke="#000080"/><path d="M6 10h10" stroke="#000080" stroke-width="2"/></svg></button>
                <button class="tool" title="Cascade windows"><svg viewBox="0 0 16 16"><g fill="#d4d0c8" stroke="#000080"><path d="M.5.5h8v6h-8zM2.500 4.500h8v6h-8zM5.500 8.500h8v6h-8z"/><path d="M0 1.500h9M2 5.500h9M5 9.500h9"/><path d="M15.500 1v3h-3M12 3l-1 1 2 2"/></g></svg></button>
            </div>
            <div class="group">
                <button class="tool pressed" title="Picture"><svg viewBox="0 0 16 16"><path d="M1.500 1.500h14v14h-14z" fill="#ff8"/><path d="M2 15l4-5 2 2 3-2 4 5z" fill="#606060" stroke="none"/><path d="M2 11l4-3 3 3 2-2 4 5M11 4h2v2h-2z"/></svg></button>
                <button class="tool" title="New picture"><svg viewBox="0 0 16 16"><path d="M1.500 7.500h13v7h-13z" fill="#ff8"/><path d="M0 4.500h8M4.500 0v8M2 1l5 6M7 1L2 7" stroke="#c0a000"/><path d="M10.500 10.500h2v2h-2z" fill="#fff"/><path d="M4 4h2v2H4z" fill="#f00" stroke="none"/></svg></button>
                <button class="tool" title="Paint"><svg viewBox="0 0 16 16"><path d="M1.500 4.500l5-3 3 4-5 4z" fill="#c0c0c0" stroke="#000080"/><path d="M2.500 4V.5h3v4"/><path d="M8 3l4 4-1 3z" fill="#800080" stroke="none"/><path d="M14.500 6l-3 5" stroke="#ff0" stroke-width="2"/><path d="M12 10l2 1-4 4H7l2-3z" fill="#000080" stroke="none"/></svg></button>
            </div>
            <div class="group player">
                <button class="tool" title="Record"><svg viewBox="0 0 16 16"><path d="M6 5h4v1h1v4h-1v1H6v-1H5V6h1z" fill="#f00" stroke="none"/></svg></button>
                <button class="tool solid" title="First"><svg viewBox="0 0 16 16"><path d="M2 3h2v10H2zM9 3v10L4 8zM14 3v10L9 8z"/></svg></button>
                <button class="tool solid" title="Rewind fast"><svg viewBox="0 0 16 16"><path d="M6 4v8L1 8zM10 4v8L5 8zM14 4v8L9 8z"/></svg></button>
                <button class="tool solid" title="Rewind"><svg viewBox="0 0 16 16"><path d="M8 4v8L3 8zM13 4v8L8 8z"/></svg></button>
                <button class="tool solid" title="Step back"><svg viewBox="0 0 16 16"><path d="M12 3v10L3 8z"/></svg></button>
                <button class="tool solid" title="Play"><svg viewBox="0 0 16 16"><path d="M4 3v10l9-5z"/></svg></button>
                <button class="tool solid" title="Forward"><svg viewBox="0 0 16 16"><path d="M3 4v8l5-4zM8 4v8l5-4z"/></svg></button>
                <button class="tool solid" title="Fast forward"><svg viewBox="0 0 16 16"><path d="M2 4v8l5-4zM6 4v8l5-4zM10 4v8l5-4z"/></svg></button>
                <button class="tool solid" title="Last"><svg viewBox="0 0 16 16"><path d="M2 3v10l5-5zM7 3v10l5-5zM12 3h2v10h-2z"/></svg></button>
            </div>
            <div class="group frames">
                <button class="tool" title="Frames"><svg viewBox="0 0 16 16"><path d="M.5 1.500h9v6h-9zM3.500 4.500h9v6h-9zM6.500 7.500h9v6h-9z" fill="#ff8"/><path d="M10.500 9.500h3v2h-3z" fill="#fff"/></svg></button>
                <button class="tool" title="Save frames"><svg viewBox="0 0 16 16"><path d="M5.500.5h9v10h-9zM3.500 2.500h9v10h-9zM.5 4.500h10v10H.5z" fill="#808000"/><path d="M3 5h5v4H3z" fill="#d4d0c8" stroke="none"/><path d="M3 11h6v4H3z" fill="#000" stroke="none"/></svg></button>
            </div>
        </div>

        <footer class="statusbar">
            <span>Ready</span>
            <span>Tscreen= 100.000s, dt= 10.000ms</span>
            <span>t=100.0000000000142500</span>
            <span class="status-last">N=1 B=0</span>
        </footer>
    </div>
    <script src="script.js"></script>
</body>
</html>
```
FILE: styles.css
```
* {
    box-sizing: border-box;
}
body {
    margin: 0;
    background-color: #d4d0c8;
    font-family: Roboto, Tahoma, sans-serif;
    font-size: 11px;
    line-height: 16px;
    color: #000;
}
button {
    margin: 0;
    padding: 0;
    border: none;
    background: none;
    font: inherit;
    color: inherit;
}
svg {
    display: block;
    flex: none;
    shape-rendering: crispEdges;
}
.symbols {
    display: none;
}
.window {
    display: flex;
    flex-direction: column;
    height: 100vh;
    padding: 3px;
    border: 1px solid;
    border-color: #d4d0c8 #404040 #404040 #d4d0c8;
    box-shadow: inset 1px 1px #fff, inset -1px -1px #808080;
}

/* title bar */
.titlebar {
    display: flex;
    align-items: center;
    height: 18px;
    padding: 0 3px 0 2px;
    background: linear-gradient(to right, #0a246a, #a6caf0);
}
.app-icon {
    width: 16px;
    height: 16px;
    margin-right: 2px;
}
.titlebar h1 {
    flex: 1;
    margin: 0;
    font-family: "Noto Sans", sans-serif;
    font-size: 11px;
    font-weight: bold;
    line-height: 18px;
    color: #fff;
    white-space: nowrap;
    overflow: hidden;
}
.window-controls {
    display: flex;
}
.control {
    display: flex;
    justify-content: center;
    align-items: center;
    width: 16px;
    height: 14px;
}
.control svg {
    width: 12px;
    height: 10px;
}
.control.close {
    margin-left: 2px;
}
.control,
.tool,
.arrow,
.thumb {
    background-color: #d4d0c8;
    border: 1px solid;
    border-color: #fff #404040 #404040 #fff;
    box-shadow: inset -1px -1px #808080;
}

/* menu */
.menubar {
    display: flex;
    height: 22px;
    border-bottom: 1px solid #fff;
    box-shadow: inset 0 -1px #808080;
}
.menubar button {
    height: 20px;
    padding: 0 6px;
}

/* toolbars */
.toolbars {
    padding: 2px 0;
}
.toolbar {
    display: flex;
    gap: 8px;
    padding-left: 8px;
}
.group {
    display: flex;
}
.tool {
    width: 23px;
    height: 22px;
    padding: 2px;
}
.tool svg {
    width: 16px;
    height: 16px;
    fill: none;
    stroke: #000;
    overflow: visible;
}
.tool.solid svg {
    fill: #000;
    stroke: none;
}
.tool.pressed {
    border-color: #404040 #fff #fff #404040;
    box-shadow: inset 1px 1px #808080;
}
.tool.pressed,
.scrollbar {
    background: repeating-conic-gradient(#fff 0 25%, #d4d0c8 0 50%) 0 0 / 2px 2px;
}
.tool text {
    stroke: none;
}
.ic {
    font-family: "Liberation Sans", sans-serif;
    font-size: 12px;
}
.tiny {
    font-size: 7px;
}
.num {
    font-size: 8px;
    fill: #000;
}
.letter {
    font-size: 10px;
    fill: #000;
}
.abc {
    font-size: 9px;
    fill: #000080;
}

/* work area */
.work {
    display: flex;
    flex: 1;
    min-height: 0;
}
.panel {
    display: grid;
    grid-template-columns: minmax(0, 1fr) 16px;
    grid-template-rows: minmax(0, 1fr) 16px;
    border: 1px solid;
    border-color: #d4d0c8 #404040 #404040 #808080;
}
.tree-panel {
    flex: none;
    width: 137px;
    padding: 3px;
    border-left-color: #d4d0c8;
    box-shadow: inset 1px 1px #fff, inset -1px -1px #808080;
}
.sheet-panel {
    flex: 1;
    min-width: 0;
    margin-left: 4px;
    padding: 2px;
    box-shadow: inset 1px 1px #fff, inset -1px -1px #808080, -2px 0 #fff;
}
.tree-view,
.sheet {
    overflow: hidden;
    background-color: #fff;
}
.tree {
    margin: 0 0 0 -25px;
}
.tree,
.tree ul {
    padding: 0;
    list-style: none;
    white-space: nowrap;
}
.tree ul {
    margin: 0;
    padding-left: 19px;
    background: repeating-linear-gradient(#808080 0 1px, transparent 1px 2px) no-repeat 27px 0 / 1px calc(100% - 8px);
}
.row {
    display: flex;
    align-items: center;
    height: 16px;
}
.toggle-space,
.branch {
    flex: none;
    width: 19px;
}
.branch {
    display: flex;
    align-items: center;
    height: 16px;
    padding-left: 4px;
    background: repeating-linear-gradient(to right, #808080 0 1px, transparent 1px 2px) no-repeat 9px 8px / 10px 1px;
}
.toggle {
    display: flex;
    justify-content: center;
    align-items: center;
    width: 9px;
    height: 9px;
    border: 1px solid #808080;
    background-color: #fff;
}
.minus,
.plus {
    width: 5px;
    height: 5px;
    background: linear-gradient(#000, #000) no-repeat 0 2px / 5px 1px;
}
.plus {
    background: linear-gradient(#000, #000) no-repeat 0 2px / 5px 1px, linear-gradient(#000, #000) no-repeat 2px 0 / 1px 5px;
}
.icon {
    width: 16px;
    height: 14px;
    margin-right: 3px;
}
.label {
    padding: 0 2px;
}
.label.selected {
    outline: 1px dotted #ffdf80;
    outline-offset: -1px;
    background-color: #0a246a;
    color: #fff;
}

/* scrollbars */
.scrollbar {
    display: flex;
}
.scrollbar.vertical {
    flex-direction: column;
}
.arrow {
    display: flex;
    justify-content: center;
    align-items: center;
    flex: none;
    width: 16px;
    height: 16px;
}
.arrow.last {
    margin-left: auto;
}
.vertical .arrow.last {
    margin: auto 0 0;
}
.thumb {
    flex: none;
    width: 16px;
    height: 16px;
}
.tree-thumb-v {
    height: 74%;
}
.tree-thumb-h {
    width: 37px;
    margin-left: 8px;
}
.grip,
.status-last {
    background:
        linear-gradient(135deg, #d4d0c8 50%, transparent 50%) no-repeat right bottom / 12px 12px,
        repeating-linear-gradient(135deg, #808080 0 2px, #fff 2px 3px, #d4d0c8 3px 4px) no-repeat right bottom / 12px 12px;
}

/* diagram */
.link {
    stroke: #000;
    stroke-dasharray: 4 3;
}
.name,
.t {
    font-family: "Liberation Sans", Arial, sans-serif;
    font-size: 11px;
}
.wheel {
    fill: #c0c0c0;
    stroke: #000;
}
.part {
    fill: #c0c0c0;
    stroke: #00f;
}
.shaft {
    stroke: #c0c0c0;
    stroke-width: 3;
}
.pin {
    fill: none;
    stroke: #000;
}
.pin circle,
circle.part {
    shape-rendering: geometricPrecision;
}
.screen {
    fill: #000080;
    stroke: #000;
}
.traces {
    fill: none;
}
.colorbar {
    width: 10px;
    margin-top: 1px;
    background: linear-gradient(
        #f00 0 6.25%, #f50 0 12.5%, #fa0 0 18.75%, #ff0 0 25%,
        #af0 0 31.25%, #5f0 0 37.5%, #0f0 0 43.75%, #0f5 0 50%,
        #0fa 0 56.25%, #0ff 0 62.5%, #0af 0 68.75%, #05f 0 75%,
        #00f 0 81.25%, #00a 0 87.5%, #005 0 93.75%, #000 0
    );
}

/* bottom */
.toolbar.bottom {
    height: 29px;
    margin-top: 1px;
    padding-top: 2px;
    border-top: 1px solid #fff;
}
.player {
    margin-left: 16px;
}
.frames {
    margin-left: 8px;
}
.statusbar {
    display: flex;
    gap: 2px;
}
.statusbar span {
    flex: 1;
    height: 18px;
    padding: 0 1px;
    border: 1px solid;
    border-color: #808080 #fff #fff #808080;
    white-space: nowrap;
    overflow: hidden;
}
```
FILE: script.js
```
// turning points of each signal, in scope pixels
const red = [
    [1, 46], [13, 17], [30, 76], [45, 42], [58, 64], [74, 15], [90, 54], [102, 34], [118, 72],
    [134, 33], [147, 53], [161, 23], [178, 61], [192, 39], [205, 63], [222, 28], [236, 52],
    [250, 32], [266, 63], [281, 37], [294, 55], [309, 30], [324, 54], [339, 38], [354, 58],
    [369, 35], [383, 52], [397, 34], [413, 56], [428, 39], [442, 55], [458, 35], [473, 52],
    [486, 38], [501, 55], [517, 39], [530, 52], [545, 37], [560, 53], [575, 40], [590, 53],
    [605, 38], [619, 51], [634, 39], [648, 52], [664, 40], [678, 49], [693, 39], [708, 51],
    [722, 41], [738, 51], [752, 40], [760, 46]
];
const cyan = [
    [1, 1], [19, 51], [27, 52], [43, 80], [63, 29], [73, 35], [85, 20], [106, 68], [119, 53],
    [130, 59], [148, 22], [164, 44], [174, 39], [191, 67], [208, 41], [220, 46], [235, 28],
    [253, 54], [264, 46], [279, 58], [296, 34], [310, 46], [323, 37], [340, 57], [355, 45],
    [367, 50], [384, 34], [400, 49], [412, 43], [428, 55], [444, 40], [457, 47], [471, 38],
    [488, 52], [501, 44], [515, 51], [532, 39], [546, 47], [560, 41], [575, 52], [590, 43],
    [604, 48], [619, 40], [634, 49], [648, 44], [664, 49], [678, 42], [693, 48], [708, 43],
    [722, 49], [738, 44], [752, 48], [760, 45]
];
const yellow = [
    [1, 46], [22, 42], [42, 47], [52, 45], [66, 48], [88, 44], [112, 44], [130, 47], [152, 46],
    [172, 43], [190, 46], [211, 47], [230, 45], [258, 44], [280, 46], [320, 45], [370, 46], [760, 46]
];

const yellow2 = [
    [1, 18], [3, 3], [5, 12], [7, 20], [9, 7], [11, 14], [12, 19], [15, 8], [18, 18], [20, 13],
    [22, 9], [24, 15], [27, 10], [30, 15], [32, 11], [34, 13], [36, 11], [38, 14],
    [40, 12], [42, 14], [44, 12], [46, 13], [48, 12], [49, 14]
];
const red2 = [
    [1, 25], [2, 48], [4, 36], [5, 25], [7, 45], [10, 29], [12, 34], [13, 41], [16, 31], [19, 39],
    [21, 33], [24, 39], [27, 34], [30, 38], [33, 34], [35, 37], [38, 35], [40, 37], [43, 35],
    [46, 37], [49, 36]
];

function drawTrace(id, points, color) {
    let d = 'M' + points[0];
    for (let i = 1; i < points.length; i++) {
        const [x0, y0] = points[i - 1];
        const [x1, y1] = points[i];
        const h = (x1 - x0) * 0.4;
        d += ` C${x0 + h} ${y0} ${x1 - h} ${y1} ${x1} ${y1}`;
    }
    const path = document.createElementNS('http://www.w3.org/2000/svg', 'path');
    path.setAttribute('d', d);
    path.setAttribute('stroke', color);
    document.getElementById(id).appendChild(path);
}

drawTrace('scope1', red, '#f00');
drawTrace('scope1', cyan, '#0ff');
drawTrace('scope1', yellow, '#ff0');
drawTrace('scope2', yellow2, '#ff0');
drawTrace('scope2', red2, '#f00');
```
